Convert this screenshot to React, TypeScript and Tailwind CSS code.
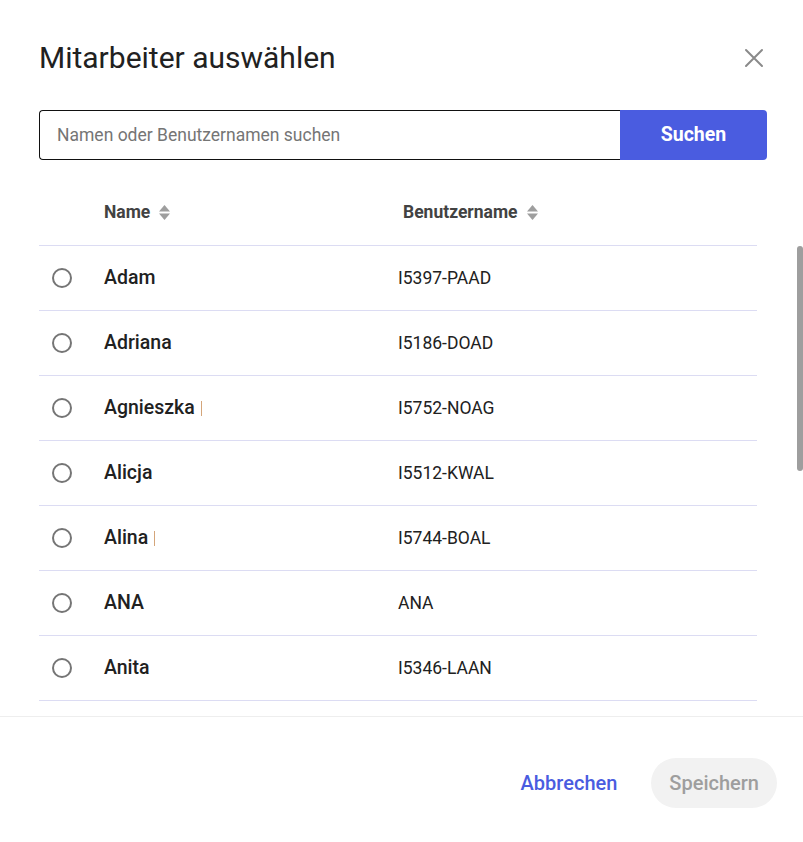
import { useState } from 'react'

type Mitarbeiter = { name: string; user: string; mark?: boolean }

const mitarbeiter: Mitarbeiter[] = [
  { name: 'Adam', user: 'I5397-PAAD' },
  { name: 'Adriana', user: 'I5186-DOAD' },
  { name: 'Agnieszka', user: 'I5752-NOAG', mark: true },
  { name: 'Alicja', user: 'I5512-KWAL' },
  { name: 'Alina', user: 'I5744-BOAL', mark: true },
  { name: 'ANA', user: 'ANA' },
  { name: 'Anita', user: 'I5346-LAAN' },
  { name: 'Anna', user: 'I5201-KOAN' },
  { name: 'Barbara', user: 'I5633-WIBA' },
  { name: 'Beata', user: 'I5418-MABE' },
  { name: 'Bogdan', user: 'I5287-NOBO' },
  { name: 'Celina', user: 'I5590-ZACE' },
  { name: 'Dariusz', user: 'I5471-KADA' },
  { name: 'Dorota', user: 'I5366-PIDO' },
  { name: 'Ewa', user: 'I5129-SZEW' },
]

function SortIcon() {
  return (
    <svg width="13" height="17" viewBox="0 0 13 17" className="ml-[8px]">
      <path d="M6.5 1 L12 7.5 H1 Z" fill="#9e9e9e" />
      <path d="M6.5 16 L12 9.5 H1 Z" fill="#9e9e9e" />
    </svg>
  )
}

export default function App() {
  const [selected, setSelected] = useState<string | null>(null)

  return (
    <div className="flex h-[842px] w-[803px] flex-col bg-white font-['Roboto',sans-serif] text-[#212121]">
      <div className="flex items-center justify-between pl-[39px] pr-[37px] pt-[38px]">
        <h1 className="text-[30px] leading-[40px] font-normal text-[#212121]">
          Mitarbeiter auswählen
        </h1>
        <button className="flex h-[24px] w-[24px] items-center justify-center">
          <svg width="20" height="20" viewBox="0 0 20 20">
            <path
              d="M2 2 L18 18 M18 2 L2 18"
              stroke="#8a8a8a"
              strokeWidth="2"
              strokeLinecap="round"
            />
          </svg>
        </button>
      </div>

      <div className="mx-[39px] mt-[32px] mr-[36px] flex h-[50px]">
        <input
          className="h-full flex-1 rounded-l-[4px] border border-r-0 border-[#111] px-[17px] text-[17.5px] text-[#212121] outline-none placeholder:text-[#757575]"
          placeholder="Namen oder Benutzernamen suchen"
        />
        <button className="h-full w-[147px] rounded-r-[4px] bg-[#4a5ce0] text-[19.5px] font-bold text-white">
          Suchen
        </button>
      </div>

      <div className="mx-[39px] mr-[46px] mt-[20px] grid h-[66px] grid-cols-[65px_299px_1fr] items-center border-b border-[#dcdcf3] text-[17.5px] font-bold text-[#424242]">
        <span />
        <span className="flex items-center">
          Name
          <SortIcon />
        </span>
        <span className="flex items-center">
          Benutzername
          <SortIcon />
        </span>
      </div>

      <div className="relative flex-1 overflow-hidden">
        <div className="h-full overflow-y-auto pl-[39px] pr-[46px] [scrollbar-width:none] [&::-webkit-scrollbar]:hidden">
          {mitarbeiter.map((m) => (
            <div
              key={m.user}
              onClick={() => setSelected(m.user)}
              className="grid h-[65px] grid-cols-[65px_294px_1fr] items-center border-b border-[#dcdcf3]"
            >
              <span className="flex pl-[13px]">
                <span className="flex h-[20px] w-[20px] items-center justify-center rounded-full border-2 border-[#757575]">
                  {selected === m.user && (
                    <span className="h-[10px] w-[10px] rounded-full bg-[#4a5ce0]" />
                  )}
                </span>
              </span>
              <span className="flex items-center text-[19.5px] font-medium text-[#212121]">
                {m.name}
                {m.mark && (
                  <span className="ml-[6px] inline-block h-[15px] w-[1px] bg-[#d4a57a]" />
                )}
              </span>
              <span className="text-[17.5px] text-[#212121]">{m.user}</span>
            </div>
          ))}
        </div>
        <div className="absolute right-0 top-0 h-[225px] w-[6px] rounded-[3px] bg-[#9e9e9e]" />
      </div>

      <div className="flex h-[126px] items-center justify-end gap-[34px] border-t border-[#eeeeee] pr-[26px] pt-[6px]">
        <button className="text-[20px] font-medium text-[#4a5ce0]">
          Abbrechen
        </button>
        <button
          disabled
          className="h-[50px] rounded-full bg-[#f2f2f2] px-[18px] text-[20px] font-medium text-[#9e9e9e]"
        >
          Speichern
        </button>
      </div>
    </div>
  )
}
